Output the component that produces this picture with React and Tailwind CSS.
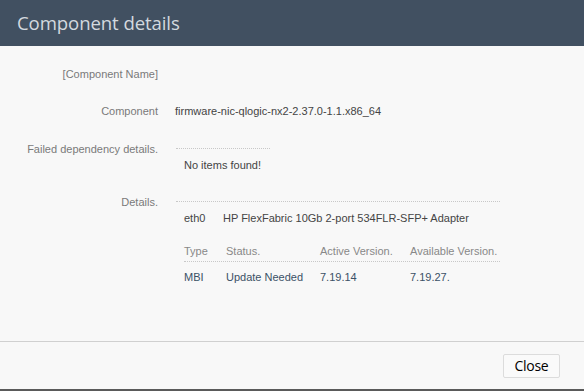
import React from 'react'

const Label = ({ children }) => (
    <div className="w-[158px] shrink-0 text-right text-[#7a7a7a]">{children}</div>
)

const App = () => {
    return (
        <div className="w-[584px] h-[391px] bg-[#f8f8f8] flex flex-col font-['Liberation_Sans',Arial,sans-serif] text-[11px] border-b-2 border-[#5a5a5a]">
            <div className="h-[46px] bg-[#415061] flex items-center px-[17px] shrink-0">
                <h1 className="text-[18.6px] text-[#d3d9df] font-['Open_Sans',sans-serif] tracking-[-0.1px]">Component details</h1>
            </div>

            <div className="flex-1 flex flex-col pt-[20px]">
                <div className="flex h-[37px]">
                    <Label>[Component Name]</Label>
                </div>
                <div className="flex h-[38px]">
                    <Label>Component</Label>
                    <div className="ml-[17px] text-[#444]">firmware-nic-qlogic-nx2-2.37.0-1.1.x86_64</div>
                </div>
                <div className="flex h-[53px]">
                    <Label>Failed dependency details.</Label>
                    <div className="ml-[18px] flex flex-col">
                        <div className="w-[94px] border-b border-dotted border-[#c8c8c8] mt-[7px]"></div>
                        <div className="ml-[8px] mt-[8px] text-[#444]">No items found!</div>
                    </div>
                </div>
                <div className="flex">
                    <Label>Details.</Label>
                    <div className="ml-[18px] flex flex-col w-[324px]">
                        <div className="border-b border-dotted border-[#c8c8c8] mt-[7px]"></div>
                        <div className="ml-[8px] mt-[8px] flex text-[#444]">
                            <span className="w-[39px]">eth0</span>
                            <span>HP FlexFabric 10Gb 2-port 534FLR-SFP+ Adapter</span>
                        </div>
                        <div className="ml-[8px] mt-[16px] flex text-[#888] pb-[2px] border-b border-dotted border-[#c8c8c8]">
                            <span className="w-[42px]">Type</span>
                            <span className="w-[94px]">Status.</span>
                            <span className="w-[90px]">Active Version.</span>
                            <span>Available Version.</span>
                        </div>
                        <div className="ml-[8px] mt-[7px] flex text-[#3b5166]">
                            <span className="w-[42px]">MBI</span>
                            <span className="w-[94px]">Update Needed</span>
                            <span className="w-[90px]">7.19.14</span>
                            <span>7.19.27.</span>
                        </div>
                    </div>
                </div>
            </div>

            <div className="h-[48px] border-t border-[#d0d0d0] flex items-center justify-end pr-[24px] shrink-0">
                <button className="w-[57px] h-[24px] bg-[#fafafa] border border-[#dcdcdc] rounded-[2px] text-[14px] tracking-[-0.3px] text-black font-['Open_Sans',sans-serif]">Close</button>
            </div>
        </div>
    )
}

export default App
